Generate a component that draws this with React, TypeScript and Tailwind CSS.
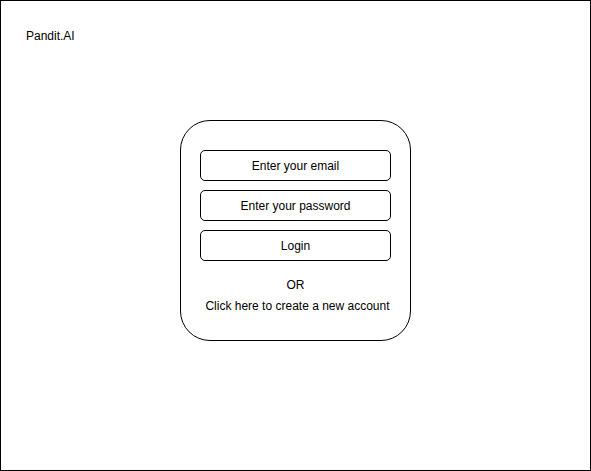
export default function App() {
  const box =
    "w-[191px] h-[31px] border border-black rounded-[5px] flex items-center justify-center text-[12px] text-black";
  return (
    <div
      className="w-[591px] h-[471px] border border-black bg-white flex flex-col"
      style={{ fontFamily: '"Liberation Sans", Arial, sans-serif' }}
    >
      <div className="ml-[25px] mt-[27px] text-[12px] leading-[16px] text-black">Pandit.AI</div>
      <div className="ml-[179px] mt-[76px] w-[231px] h-[221px] border border-black rounded-[30px] flex flex-col items-center pt-[29px]">
        <div className="flex flex-col gap-[9px]">
          <div className={box}>Enter your email</div>
          <div className={box}>Enter your password</div>
          <div className={box}>Login</div>
        </div>
        <div className="mt-[16px] text-[12px] leading-[16px] text-black">OR</div>
        <div className="mt-[5px] ml-[4px] text-[12px] leading-[16px] text-black">Click here to create a new account</div>
      </div>
    </div>
  );
}
